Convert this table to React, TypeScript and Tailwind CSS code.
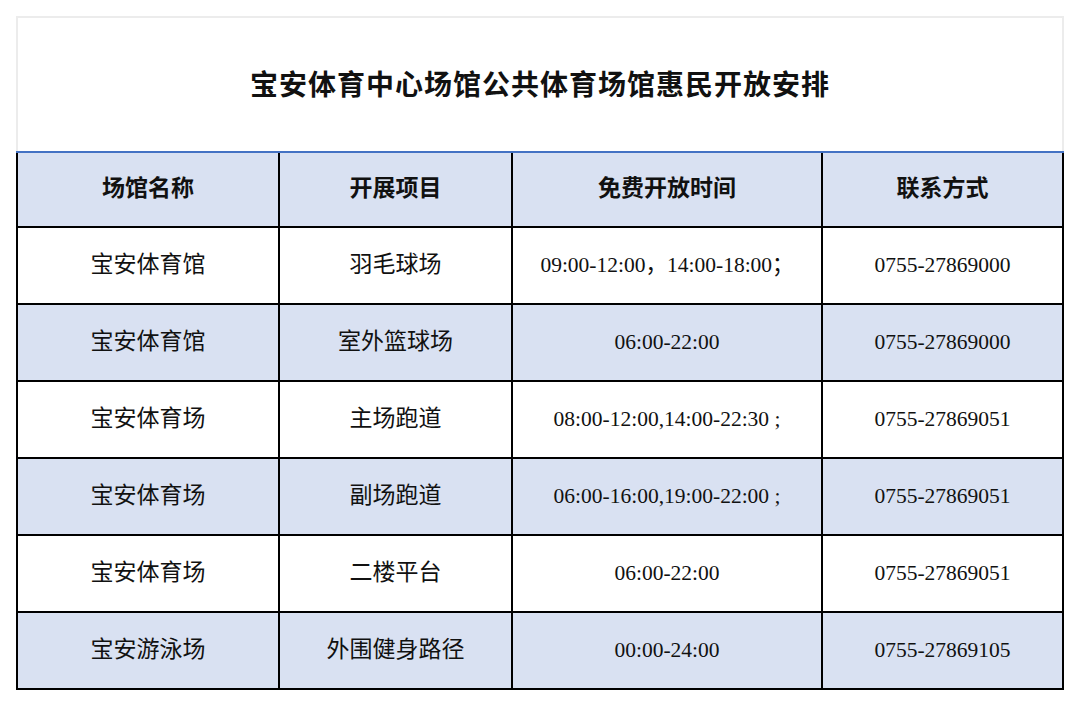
const rows = [
  ['宝安体育馆', '羽毛球场', '09:00-12:00，14:00-18:00；', '0755-27869000'],
  ['宝安体育馆', '室外篮球场', '06:00-22:00', '0755-27869000'],
  ['宝安体育场', '主场跑道', '08:00-12:00,14:00-22:30 ;', '0755-27869051'],
  ['宝安体育场', '副场跑道', '06:00-16:00,19:00-22:00 ;', '0755-27869051'],
  ['宝安体育场', '二楼平台', '06:00-22:00', '0755-27869051'],
  ['宝安游泳场', '外围健身路径', '00:00-24:00', '0755-27869105'],
]

const widths = ['w-[264px] border-l-2', 'w-[233px]', 'w-[310px]', 'w-[241px]']

const font = { fontFamily: "'Liberation Serif', 'Noto Sans CJK SC', serif" }

export default function App() {
  return (
    <div className="w-[1080px] h-[706px] bg-white pt-[16px] px-[16px] text-[#111]" style={font}>
      <div className="w-[1048px]">
        <div className="h-[135px] border-2 border-b-0 border-[#ececec] flex items-center justify-center pt-[2px]">
          <h1 className="text-[28px] font-bold tracking-[1px]">
            宝安体育中心场馆公共体育场馆惠民开放安排
          </h1>
        </div>
        <div className="flex h-[77px] bg-[#d9e1f2] border-t-2 border-t-[#4472c4] border-b-2 border-black">
          {['场馆名称', '开展项目', '免费开放时间', '联系方式'].map((h, i) => (
            <div
              key={h}
              className={`${widths[i]} border-r-2 border-black flex items-center justify-center text-[23px] font-bold`}
            >
              {h}
            </div>
          ))}
        </div>
        {rows.map((r, ri) => (
          <div
            key={ri}
            className={`flex h-[77px] border-b-2 border-black ${ri % 2 === 1 ? 'bg-[#d9e1f2]' : 'bg-white'}`}
          >
            {r.map((c, i) => (
              <div
                key={i}
                className={`${widths[i]} border-r-2 border-black flex items-center justify-center ${i < 2 ? 'text-[23px]' : 'text-[21.5px]'}`}
              >
                {c}
              </div>
            ))}
          </div>
        ))}
      </div>
    </div>
  )
}
